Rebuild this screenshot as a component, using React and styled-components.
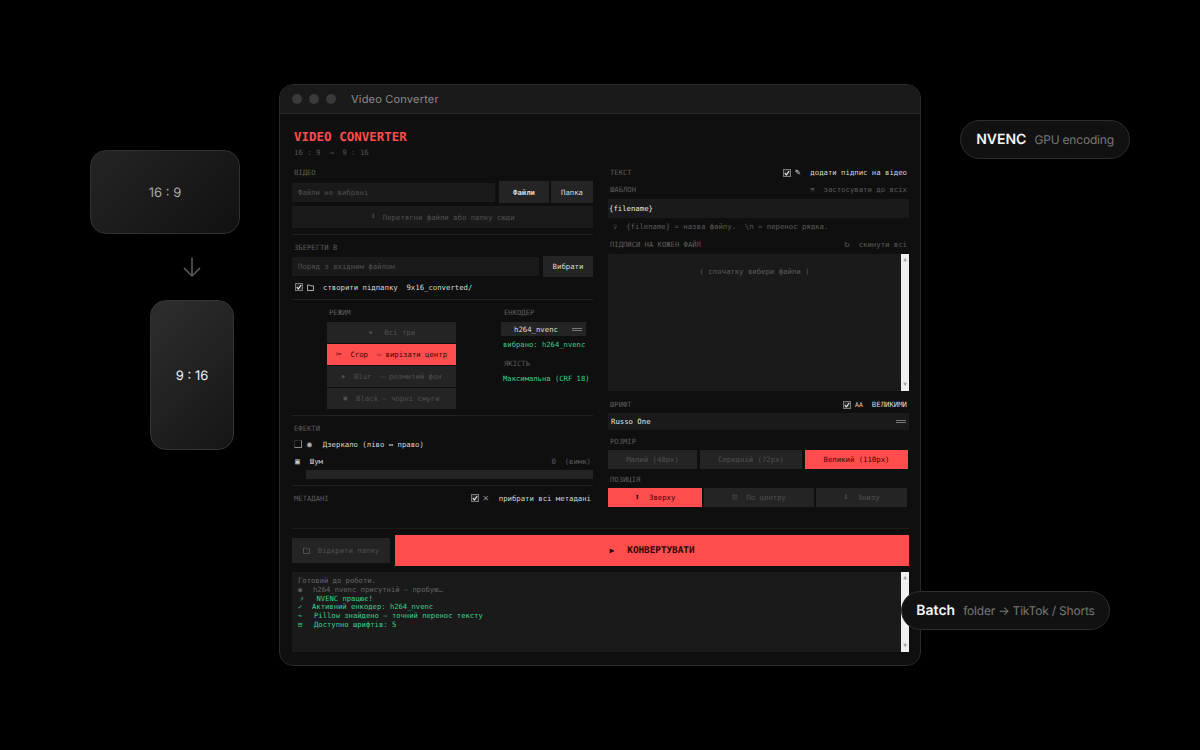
import styled, { createGlobalStyle } from 'styled-components';

const GlobalStyle = createGlobalStyle`
  html, body { margin: 0; padding: 0; background: #000; }
  * { box-sizing: border-box; }
`;

const mono = `'DejaVu Sans Mono', 'Liberation Mono', monospace`;
const sans = `Inter, 'Noto Sans', sans-serif`;
const red = '#ff4d4d';
const green = '#3ecf8e';

const Stage = styled.div`
  position: relative;
  width: 1200px;
  height: 750px;
  padding: 84px 0 0 279px;
  overflow: hidden;
  background: #000;
  font-family: ${mono};
  text-rendering: geometricPrecision;
`;

const Window = styled.div`
  width: 642px;
  height: 582px;
  display: flex;
  flex-direction: column;
  background: #0f0f0f;
  border: 1px solid #2a2a2a;
  border-radius: 14px;
  overflow: hidden;
`;

const TitleBar = styled.div`
  height: 29px;
  flex: none;
  display: flex;
  align-items: center;
  padding-left: 12px;
  background: #1a1a1a;
  border-bottom: 1px solid #2a2a2a;
`;

const Dot = styled.span`
  width: 10px;
  height: 10px;
  border-radius: 50%;
  background: #3a3a3a;
  margin-right: 7px;
`;

const TitleText = styled.span`
  margin-left: 8px;
  font: 400 11px ${sans};
  letter-spacing: 0.2px;
  color: #8a8a8a;
`;

const Body = styled.div`
  flex: 1;
  display: flex;
  flex-direction: column;
  padding: 16px 11px 0 12px;
`;

const AppTitle = styled.div`
  height: 13px;
  line-height: 13px;
  padding-left: 2px;
  font-size: 12.5px;
  font-weight: 700;
  color: ${red};
`;

const Subtitle = styled.div`
  height: 9px;
  line-height: 9px;
  margin-top: 5px;
  padding-left: 2px;
  font-size: 7.3px;
  color: #555;
  white-space: pre;
`;

const Columns = styled.div`
  display: grid;
  grid-template-columns: 301px 301px;
  column-gap: 15px;
  margin-top: 11px;
  height: 360px;
`;

const Column = styled.div`
  display: flex;
  flex-direction: column;
`;

const Label = styled.div`
  height: 9px;
  line-height: 9px;
  padding-left: ${p => p.$indent || 0}px;
  font-size: 7.2px;
  color: #5c5c5c;
  white-space: pre;
`;

const Row = styled.div`
  display: flex;
  align-items: center;
  justify-content: ${p => p.$between ? 'space-between' : 'flex-start'};
  gap: ${p => p.$gap || 0}px;
  margin-top: ${p => p.$top || 0}px;
  padding-left: ${p => p.$indent || 0}px;
  height: ${p => p.$h ? `${p.$h}px` : 'auto'};
`;

const Field = styled.div`
  flex: ${p => p.$wide ? 'none' : 1};
  width: ${p => p.$wide ? '301px' : 'auto'};
  height: ${p => p.$h || 19}px;
  margin-top: ${p => p.$top || 0}px;
  display: flex;
  align-items: center;
  justify-content: ${p => p.$between ? 'space-between' : 'flex-start'};
  padding: 0 ${p => p.$pad ?? 6}px;
  background: #1a1a1a;
  font-size: 7.3px;
  color: ${p => p.$bright ? '#e6e6e6' : '#505050'};
  white-space: pre;
`;

const Button = styled.div`
  flex: none;
  width: ${p => p.$width}px;
  height: ${p => p.$h || 22}px;
  margin-left: ${p => p.$left || 0}px;
  display: flex;
  align-items: center;
  justify-content: center;
  background: #242424;
  font-size: 7.3px;
  font-weight: ${p => p.$bold ? 700 : 400};
  color: #dcdcdc;
`;

const DropZone = styled.div`
  height: 22px;
  margin-top: 3px;
  display: flex;
  align-items: center;
  justify-content: center;
  gap: 7px;
  background: #1a1a1a;
  font-size: 7.3px;
  color: #505050;
`;

const Divider = styled.div`
  height: 1px;
  margin: ${p => p.$top || 6}px 0 ${p => p.$bottom || 8}px;
  background: #222;
`;

const Checkbox = styled.span`
  flex: none;
  width: 8px;
  height: 8px;
  display: flex;
  align-items: center;
  justify-content: center;
  border: 1px solid #777;
  border-color: ${p => p.$on ? '#777' : '#2c2c2c #888 #888 #2c2c2c'};
  background: ${p => p.$on ? '#2a2a2a' : 'transparent'};
`;

const CheckText = styled.span`
  margin-left: ${p => p.$left || 0}px;
  font-size: ${p => p.$size || 7.3}px;
  color: ${p => p.$dim ? '#5c5c5c' : '#d8d8d8'};
  white-space: pre;
`;

const Glyph = styled.span`
  flex: none;
  display: inline-flex;
  align-items: center;
  justify-content: center;
  font-size: ${p => p.$size || 7}px;
  color: ${p => p.$color || 'inherit'};
`;

const ModeGrid = styled.div`
  display: grid;
  grid-template-columns: 129px 1fr;
  column-gap: 45px;
  padding-left: 35px;
`;

const ModeList = styled.div`
  display: flex;
  flex-direction: column;
  gap: 1px;
  margin-top: 5px;
`;

const ModeButton = styled.div`
  height: 21px;
  display: flex;
  align-items: center;
  justify-content: center;
  gap: ${p => p.$gap || 8}px;
  background: ${p => p.$active ? red : '#242424'};
  color: ${p => p.$active ? '#3a0505' : '#505050'};
  font-size: 7.3px;
  white-space: pre;
`;

const EncoderSelect = styled.div`
  width: 85px;
  height: 14px;
  margin-top: 5px;
  display: flex;
  align-items: center;
  justify-content: space-between;
  padding: 0 4px 0 13px;
  background: #242424;
  font-size: 7.3px;
  color: #dcdcdc;
`;

const SelectBar = styled.span`
  width: 10px;
  height: 3px;
  border-top: 1px solid #777;
  border-bottom: 1px solid #777;
`;

const GreenText = styled.div`
  height: 9px;
  line-height: 9px;
  margin-top: ${p => p.$top || 0}px;
  padding-left: 2px;
  font-size: 7.2px;
  color: ${green};
  white-space: pre;
`;

const Slider = styled.div`
  height: 9px;
  margin: 4px 0 0 14px;
  background: #242424;
`;

const HeadRow = styled.div`
  height: 9px;
  display: flex;
  align-items: center;
  justify-content: space-between;
  margin-top: ${p => p.$top || 0}px;
  padding-right: 2px;
`;

const ListBox = styled.div`
  height: 137px;
  margin-top: 5px;
  display: flex;
  background: #1a1a1a;
`;

const ListText = styled.div`
  flex: 1;
  padding-top: 13px;
  text-align: center;
  font-size: 7.3px;
  color: #5c5c5c;
  white-space: pre;
`;

const ScrollBar = styled.div`
  flex: none;
  width: 8px;
  display: flex;
  flex-direction: column;
  justify-content: space-between;
  align-items: center;
  padding: 3px 0;
  background: #f0f0f0;
  font-size: 6px;
  line-height: 6px;
  color: #a3a3a3;
`;

const SectionLabel = styled(Label)`
  margin-top: ${p => p.$top || 0}px;
`;

const Options = styled.div`
  display: flex;
  gap: ${p => p.$gap || 3}px;
  height: 19px;
  margin-top: 4px;
  padding-right: 2px;
`;

const Option = styled.div`
  flex: none;
  width: ${p => p.$width}px;
  display: flex;
  align-items: center;
  justify-content: center;
  gap: ${p => p.$gap || 0}px;
  background: ${p => p.$active ? red : '#242424'};
  color: ${p => p.$active ? '#3a0505' : '#505050'};
  font-size: 7.3px;
  white-space: pre;
`;

const Footer = styled.div`
  flex: none;
  height: 38px;
  display: flex;
  align-items: center;
  gap: 5px;
  border-top: 1px solid #1c1c1c;
  padding-top: 6px;
`;

const OpenFolder = styled.div`
  flex: none;
  width: 98px;
  height: 25px;
  display: flex;
  align-items: center;
  justify-content: center;
  gap: 8px;
  background: #242424;
  color: #505050;
  font-size: 7.3px;
`;

const Convert = styled.div`
  flex: 1;
  height: 31px;
  display: flex;
  align-items: center;
  justify-content: center;
  gap: 13px;
  background: ${red};
  color: #2b0505;
  font-size: 9.3px;
  font-weight: 700;
`;

const LogBox = styled.div`
  flex: none;
  height: 80px;
  margin-top: 6px;
  display: flex;
  background: #1a1a1a;
`;

const LogLines = styled.div`
  flex: 1;
  padding: 5px 6px;
  display: flex;
  flex-direction: column;
`;

const LogLine = styled.div`
  height: 8.8px;
  line-height: 8.8px;
  display: flex;
  align-items: center;
  font-size: 7.2px;
  color: ${p => p.$green ? green : '#666'};
  white-space: pre;
`;

const LogIcon = styled.span`
  flex: none;
  width: ${p => p.$width}px;
  padding-left: ${p => p.$indent || 0}px;
  font-size: 7px;
`;

const Aspects = styled.div`
  position: absolute;
  left: 90px;
  top: 150px;
  width: 150px;
  display: flex;
  flex-direction: column;
  align-items: flex-end;
`;

const AspectCard = styled.div`
  width: ${p => p.$w}px;
  height: ${p => p.$h}px;
  margin-right: ${p => p.$right || 0}px;
  padding-top: 1px;
  display: flex;
  align-items: center;
  justify-content: center;
  border: 1px solid ${p => p.$bright ? '#343434' : '#303030'};
  border-radius: 16px;
  background: linear-gradient(135deg, ${p => p.$bright ? '#2e2e2e, #151515' : '#242424, #111'});
  font: 400 13px ${sans};
  color: ${p => p.$bright ? '#f2f2f2' : '#a8a8a8'};
`;

const ArrowHolder = styled.div`
  align-self: flex-start;
  height: 66px;
  margin-left: 92px;
  display: flex;
  align-items: center;
  color: #5e5e5e;
`;

const Pill = styled.div`
  position: absolute;
  left: ${p => p.$left}px;
  top: ${p => p.$top}px;
  width: ${p => p.$width}px;
  height: 39px;
  display: flex;
  align-items: center;
  justify-content: center;
  gap: 8px;
  border: 1px solid #2e2e2e;
  border-radius: 20px;
  background: #111;
`;

const PillStrong = styled.span`
  font: 600 14px ${sans};
  color: #f5f5f5;
`;

const PillText = styled.span`
  font: 400 12px ${sans};
  letter-spacing: -0.2px;
  color: #777;
`;

const Tick = () => (
  <svg width="6" height="6" viewBox="0 0 6 6" fill="none" stroke="#f0f0f0" strokeWidth="1.1">
    <path d="M0.8 3.2 L2.4 4.8 L5.2 1" />
  </svg>
);

const FolderIcon = ({ color = '#cfcfcf' }) => (
  <svg width="7" height="7" viewBox="0 0 7 7" fill="none" stroke={color} strokeWidth="0.8">
    <path d="M0.5 1 H2.6 L3.2 1.8 H6.5 V6.5 H0.5 Z" />
  </svg>
);

const ArrowDown = () => (
  <svg width="20" height="22" viewBox="0 0 20 22" fill="none" stroke="currentColor" strokeWidth="1.5">
    <path d="M10 1.5 V20 M2 12 L10 20 L18 12" />
  </svg>
);

const App = () => {
  return (
    <>
      <GlobalStyle />
      <Stage>
        <Window>
          <TitleBar>
            <Dot />
            <Dot />
            <Dot />
            <TitleText>Video Converter</TitleText>
          </TitleBar>
          <Body>
            <AppTitle>VIDEO CONVERTER</AppTitle>
            <Subtitle>16 : 9  →  9 : 16</Subtitle>
            <Columns>
              <Column>
                <Label $indent={2}>ВІДЕО</Label>
                <Row $top={4} $gap={2}>
                  <Field>Файли не вибрані</Field>
                  <Button $width={50} $left={2} $bold>Файли</Button>
                  <Button $width={42}>Папка</Button>
                </Row>
                <DropZone>
                  <Glyph $size={9}>⬇</Glyph>
                  <span>Перетягни файли або папку сюди</span>
                </DropZone>
                <Divider />
                <Label $indent={2}>ЗБЕРЕГТИ В</Label>
                <Row $top={4} $gap={4}>
                  <Field>Поряд з вхідним файлом</Field>
                  <Button $width={50} $h={21}>Вибрати</Button>
                </Row>
                <Row $top={5} $h={10} $gap={4} $indent={3}>
                  <Checkbox $on><Tick /></Checkbox>
                  <FolderIcon />
                  <CheckText $left={5}>створити підпапку  9x16_converted/</CheckText>
                </Row>
                <Divider $top={7} $bottom={8} />
                <ModeGrid>
                  <div>
                    <Label $indent={2}>РЕЖИМ</Label>
                    <ModeList>
                      <ModeButton $gap={11}><Glyph $size={9}>✦</Glyph><span>Всі три</span></ModeButton>
                      <ModeButton $gap={9} $active><Glyph $size={9}>✂</Glyph><span>Crop  — вирізати центр</span></ModeButton>
                      <ModeButton $gap={9}><Glyph $size={6}>◆</Glyph><span>Blur  — розмитий фон</span></ModeButton>
                      <ModeButton $gap={9}><Glyph $size={6}>■</Glyph><span>Black — чорні смуги</span></ModeButton>
                    </ModeList>
                  </div>
                  <div>
                    <Label $indent={3}>ЕНКОДЕР</Label>
                    <EncoderSelect>
                      <span>h264_nvenc</span>
                      <SelectBar />
                    </EncoderSelect>
                    <GreenText $top={4}>вибрано: h264_nvenc</GreenText>
                    <SectionLabel $indent={3} $top={10}>ЯКІСТЬ</SectionLabel>
                    <GreenText $top={6}>Максимальна (CRF 18)</GreenText>
                  </div>
                </ModeGrid>
                <Divider $top={6} $bottom={8} />
                <Label $indent={2}>ЕФЕКТИ</Label>
                <Row $top={6} $h={10} $gap={5} $indent={2}>
                  <Checkbox />
                  <Glyph $size={8} $color="#bdbdbd">◉</Glyph>
                  <CheckText $left={6}>Дзеркало (ліво ↔ право)</CheckText>
                </Row>
                <Row $top={7} $h={10} $between>
                  <Row $gap={10} $indent={3}>
                    <Glyph $size={8} $color="#cfcfcf">▣</Glyph>
                    <CheckText>Шум</CheckText>
                  </Row>
                  <CheckText $dim style={{ marginRight: 2 }}>0  (вимк)</CheckText>
                </Row>
                <Slider />
                <Divider $top={6} $bottom={7} />
                <Row $between $h={10}>
                  <Label $indent={2}>МЕТАДАНІ</Label>
                  <Row $gap={4} style={{ marginRight: 2 }}>
                    <Checkbox $on><Tick /></Checkbox>
                    <Glyph $size={10} $color="#8a8a8a">✕</Glyph>
                    <CheckText $left={6}>прибрати всі метадані</CheckText>
                  </Row>
                </Row>
              </Column>

              <Column>
                <HeadRow>
                  <Label $indent={2}>ТЕКСТ</Label>
                  <Row $gap={4}>
                    <Checkbox $on><Tick /></Checkbox>
                    <Glyph $size={9} $color="#d8d8d8">✎</Glyph>
                    <CheckText $left={6}>додати підпис на відео</CheckText>
                  </Row>
                </HeadRow>
                <HeadRow $top={8}>
                  <Label $indent={2}>ШАБЛОН</Label>
                  <CheckText $dim>≡  застосувати до всіх</CheckText>
                </HeadRow>
                <Field $wide $bright $pad={1} $top={5}>{'{filename}'}</Field>
                <Row $top={4} $h={9} $gap={9} $indent={5}>
                  <Glyph $size={7} $color="#505050">♀</Glyph>
                  <CheckText $dim>{'{filename} = назва файлу.  \\n = перенос рядка.'}</CheckText>
                </Row>
                <HeadRow $top={9}>
                  <Label $indent={2}>ПІДПИСИ НА КОЖЕН ФАЙЛ</Label>
                  <Row $gap={9}>
                    <Glyph $size={9} $color="#5c5c5c">↻</Glyph>
                    <CheckText $dim>скинути всі</CheckText>
                  </Row>
                </HeadRow>
                <ListBox>
                  <ListText>( спочатку вибери файли )</ListText>
                  <ScrollBar><span>▲</span><span>▼</span></ScrollBar>
                </ListBox>
                <HeadRow $top={9}>
                  <Label $indent={2}>ШРИФТ</Label>
                  <Row $gap={4}>
                    <Checkbox $on><Tick /></Checkbox>
                    <CheckText $size={6.5}>АА</CheckText>
                    <CheckText $left={5}>ВЕЛИКИМИ</CheckText>
                  </Row>
                </HeadRow>
                <Field $wide $bright $between $h={17} $pad={3} $top={4}>
                  <span>Russo One</span>
                  <SelectBar />
                </Field>
                <SectionLabel $indent={2} $top={7}>РОЗМІР</SectionLabel>
                <Options>
                  <Option $width={89}>Малий (48px)</Option>
                  <Option $width={102}>Середній (72px)</Option>
                  <Option $width={103} $active>Великий (110px)</Option>
                </Options>
                <SectionLabel $indent={2} $top={6}>ПОЗИЦІЯ</SectionLabel>
                <Options $gap={2}>
                  <Option $width={94} $gap={9} $active><Glyph $size={9}>⬆</Glyph><span>Зверху</span></Option>
                  <Option $width={110} $gap={9}><Glyph $size={9}>⊡</Glyph><span>По центру</span></Option>
                  <Option $width={91} $gap={9}><Glyph $size={9}>⬇</Glyph><span>Знизу</span></Option>
                </Options>
              </Column>
            </Columns>
            <Footer>
              <OpenFolder>
                <FolderIcon color="#5a5a5a" />
                <span>Відкрити папку</span>
              </OpenFolder>
              <Convert>
                <Glyph $size={8}>▶</Glyph>
                <span>КОНВЕРТУВАТИ</span>
              </Convert>
            </Footer>
            <LogBox>
              <LogLines>
                <LogLine>Готовий до роботи.</LogLine>
                <LogLine><LogIcon $width={15}>◉</LogIcon><span>h264_nvenc присутній — пробую…</span></LogLine>
                <LogLine $green><LogIcon $width={18.5} $indent={2}>⚡</LogIcon><span>NVENC працює!</span></LogLine>
                <LogLine $green><LogIcon $width={14}>✓</LogIcon><span>Активний енкодер: h264_nvenc</span></LogLine>
                <LogLine $green><LogIcon $width={16}>⌁</LogIcon><span>Pillow знайдено — точний перенос тексту</span></LogLine>
                <LogLine $green><LogIcon $width={16}>⊟</LogIcon><span>Доступно шрифтів: 5</span></LogLine>
              </LogLines>
              <ScrollBar><span>▲</span><span>▼</span></ScrollBar>
            </LogBox>
          </Body>
        </Window>

        <Aspects>
          <AspectCard $w={150} $h={84}>16 : 9</AspectCard>
          <ArrowHolder><ArrowDown /></ArrowHolder>
          <AspectCard $w={84} $h={150} $right={6} $bright>9 : 16</AspectCard>
        </Aspects>

        <Pill $left={960} $top={120} $width={170}>
          <PillStrong>NVENC</PillStrong>
          <PillText>GPU encoding</PillText>
        </Pill>
        <Pill $left={901} $top={591} $width={209}>
          <PillStrong>Batch</PillStrong>
          <PillText>folder → TikTok / Shorts</PillText>
        </Pill>
      </Stage>
    </>
  );
};

export default App;
